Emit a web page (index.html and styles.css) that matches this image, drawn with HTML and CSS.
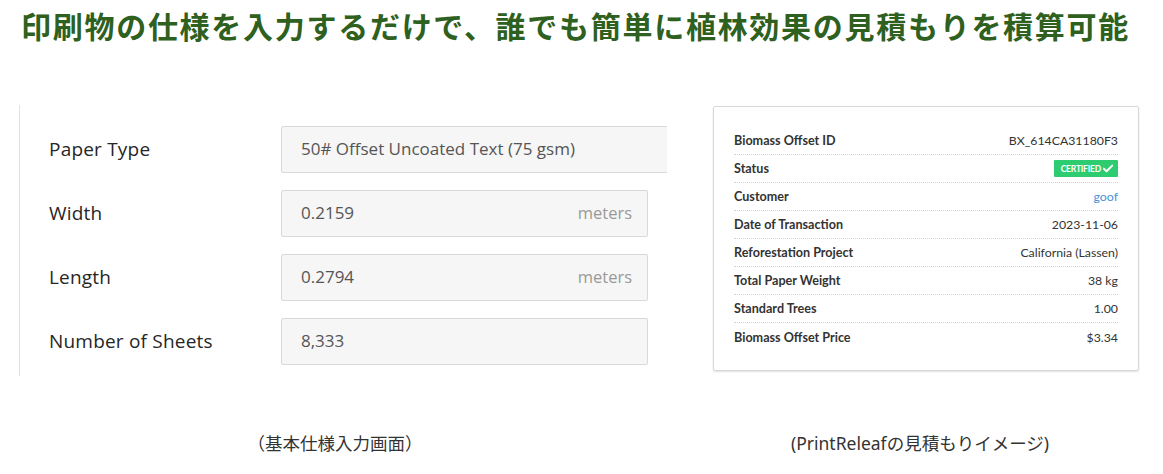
FILE: index.html
```html
<!DOCTYPE html>
<html lang="ja">
<head>
<meta charset="utf-8">
<title>PrintReleaf</title>
<link rel="stylesheet" href="styles.css">
</head>
<body>
<h1 class="title">印刷物の仕様を入力するだけで、誰でも簡単に植林効果の見積もりを積算可能</h1>
<div class="figures">
  <div class="fig fig-left">
    <div class="form">
      <div class="row">
        <div class="label">Paper Type</div>
        <div class="input input-wide"><span class="val">50# Offset Uncoated Text (75 gsm)</span></div>
      </div>
      <div class="row">
        <div class="label">Width</div>
        <div class="input"><span class="val">0.2159</span><span class="unit">meters</span></div>
      </div>
      <div class="row">
        <div class="label">Length</div>
        <div class="input"><span class="val">0.2794</span><span class="unit">meters</span></div>
      </div>
      <div class="row">
        <div class="label">Number of Sheets</div>
        <div class="input"><span class="val">8,333</span></div>
      </div>
    </div>
    <p class="caption">（基本仕様入力画面）</p>
  </div>
  <div class="fig fig-right">
    <div class="card">
      <div class="crow"><span class="ck">Biomass Offset ID</span><span class="cv">BX_614CA31180F3</span></div>
      <div class="crow"><span class="ck">Status</span><span class="badge">CERTIFIED<svg class="check" viewBox="0 0 12 10" width="10" height="9"><path d="M1 5.2 L4.3 8.3 L11 1.5" fill="none" stroke="#fff" stroke-width="2.4" stroke-linecap="round" stroke-linejoin="round"/></svg></span></div>
      <div class="crow"><span class="ck">Customer</span><span class="cv link">goof</span></div>
      <div class="crow"><span class="ck">Date of Transaction</span><span class="cv">2023-11-06</span></div>
      <div class="crow"><span class="ck">Reforestation Project</span><span class="cv">California (Lassen)</span></div>
      <div class="crow"><span class="ck">Total Paper Weight</span><span class="cv">38 kg</span></div>
      <div class="crow"><span class="ck">Standard Trees</span><span class="cv">1.00</span></div>
      <div class="crow last"><span class="ck">Biomass Offset Price</span><span class="cv">$3.34</span></div>
    </div>
    <p class="caption">(PrintReleafの見積もりイメージ)</p>
  </div>
</div>
</body>
</html>
```

FILE: styles.css
```css
html, body {
  margin: 0;
  padding: 0;
  background: #fff;
}
body {
  font-family: Lato, "Open Sans", "Noto Sans CJK JP", sans-serif;
  color: #333;
  width: 1163px;
  height: 474px;
  overflow: hidden;
}
.title {
  margin: 0;
  padding: 5px 0 0 21px;
  font-family: "Noto Sans CJK JP", sans-serif;
  font-weight: 700;
  font-size: 30px;
  line-height: 40px;
  letter-spacing: 1.72px;
  color: #2e6020;
  white-space: nowrap;
}
.figures {
  display: flex;
  margin-top: 60px;
}
.fig {
  display: flex;
  flex-direction: column;
}
.fig-left {
  width: 648px;
  margin-left: 19px;
}
.fig-right {
  width: 426px;
  margin-left: 46px;
  margin-top: 1px;
}
.form {
  border-left: 1px solid #e2e2e2;
  height: 271px;
  padding-top: 21px;
  box-sizing: border-box;
  overflow: hidden;
  display: flex;
  flex-direction: column;
  gap: 17px;
}
.row {
  display: flex;
  align-items: center;
  height: 47px;
}
.label {
  flex: none;
  width: 261px;
  padding-left: 29px;
  padding-bottom: 2px;
  box-sizing: border-box;
  font-size: 19px;
  font-weight: 500;
  color: #262626;
  font-family: "Open Sans", sans-serif;
  letter-spacing: 0.2px;
}
.input {
  flex: none;
  box-sizing: border-box;
  width: 367px;
  height: 47px;
  background: #f6f6f6;
  border: 1px solid #d9d9d9;
  border-radius: 2px;
  display: flex;
  align-items: center;
  justify-content: space-between;
  padding: 0 15px 2px 19px;
  font-size: 17px;
  font-weight: 500;
  font-family: "Open Sans", sans-serif;
  color: #555;
}
.input-wide {
  width: 420px;
}
.unit {
  color: #999;
  font-size: 16.5px;
}
.caption {
  margin: 0;
  text-align: center;
  font-family: "Noto Sans", "Noto Sans CJK JP", sans-serif;
  font-size: 17.5px;
  color: #333;
}
.fig-left .caption {
  margin-top: 54px;
  margin-left: -16px;
}
.fig-right .caption {
  margin-top: 59px;
  margin-left: -12px;
}
.card {
  box-sizing: border-box;
  height: 265px;
  border: 1px solid #d6d9dc;
  border-radius: 2px;
  box-shadow: 0 1px 2px rgba(0,0,0,0.12);
  padding: 20px 20px 0 20px;
  display: flex;
  flex-direction: column;
}
.crow {
  box-sizing: border-box;
  display: flex;
  justify-content: space-between;
  align-items: center;
  height: 28px;
  border-bottom: 1px dotted #d4d4d4;
  font-size: 12.3px;
  font-family: Lato, sans-serif;
}
.crow.last {
  border-bottom: none;
}
.ck {
  font-weight: 700;
  font-size: 12.6px;
  color: #333;
}
.cv {
  color: #333;
}
.cv.link {
  color: #4a90d9;
}
.badge {
  display: inline-flex;
  align-items: center;
  gap: 2px;
  background: #2ecc71;
  color: #fff;
  font-size: 8.5px;
  font-weight: 700;
  height: 17px;
  padding: 0 5px 0 7px;
  border-radius: 1px;
  letter-spacing: -0.2px;
}
.check {
  display: block;
}
```
